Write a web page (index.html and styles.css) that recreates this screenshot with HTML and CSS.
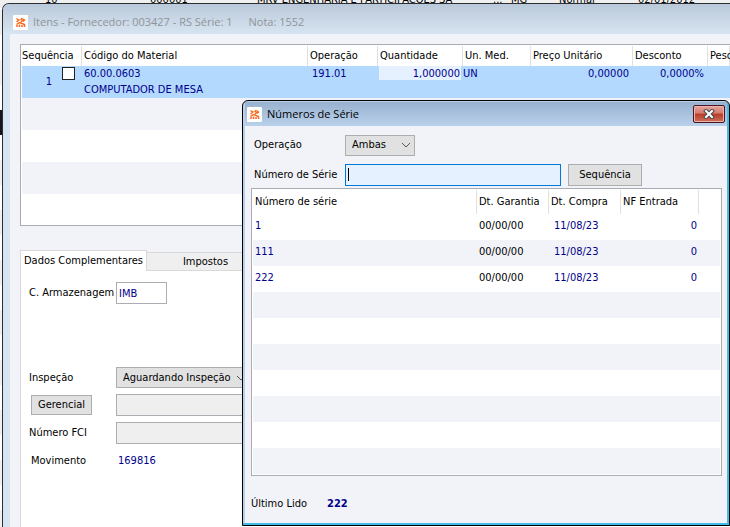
FILE: index.html
```html
<!DOCTYPE html>
<html lang="pt-BR">
<head>
    <meta charset="UTF-8">
    <meta name="viewport" content="width=device-width, initial-scale=1.0">
    <title>Números de Série</title>
    <link rel="stylesheet" href="styles.css">
</head>
<body>

    <!-- Lista de notas, atrás das janelas -->
    <div class="lista-fundo">
        <span>10</span><span>000001</span><span>MRV ENGENHARIA E PARTICIPACOES SA</span><span>...</span><span>MG</span><span>Normal</span><span>02/01/2012</span>
        <div class="linha-atual"></div>
    </div>

    <!-- Janela de itens -->
    <div class="janela itens">
        <div class="titulo">
            <svg class="logo" viewBox="0 0 15 15"><rect width="15" height="15" rx="1" fill="#fff"/><g stroke="#f7691e" stroke-width="1.500" fill="none"><path d="M3.500 3.500l2 1.500M3.500 7l3-2.500M7.500 5l2-2M8 7l3-3M10 6.500l2-2M3.500 9.500l3-2 5 2M4 12V10M6.500 12V9.500M9 12V10M11.500 12V9"/></g></svg>
            <span>Itens - Fornecedor: 003427 - RS Série: 1</span>
            <span class="nota">Nota: 1552</span>
        </div>
        <div class="corpo">
            <div class="grade grade-itens">
                <table>
                    <colgroup>
                        <col class="c-seq"><col class="c-cod"><col class="c-op"><col class="c-qtd"><col class="c-un"><col class="c-preco"><col class="c-desc"><col>
                    </colgroup>
                    <thead>
                        <tr><th>Sequência</th><th>Código do Material</th><th>Operação</th><th>Quantidade</th><th>Un. Med.</th><th>Preço Unitário</th><th>Desconto</th><th>Peso</th></tr>
                    </thead>
                    <tbody>
                        <tr class="selecionada">
                            <td><div class="seq"><span>1</span><input type="checkbox" aria-label="Selecionar item 1"></div></td>
                            <td>60.00.0603<br>COMPUTADOR DE MESA</td>
                            <td class="op">191.01</td>
                            <td class="num"><div class="foco">1,000000</div></td>
                            <td class="un">UN</td>
                            <td class="num">0,00000</td>
                            <td class="num">0,0000%</td>
                            <td></td>
                        </tr>
                        <tr><td colspan="8"></td></tr>
                        <tr><td colspan="8"></td></tr>
                        <tr><td colspan="8"></td></tr>
                        <tr><td colspan="8"></td></tr>
                    </tbody>
                </table>
            </div>

            <div class="abas" role="tablist">
                <button class="aba ativa" role="tab" aria-selected="true">Dados Complementares</button>
                <button class="aba" role="tab" aria-selected="false">Impostos</button>
            </div>
            <div class="painel">
                <label for="armazenagem">C. Armazenagem</label>
                <input class="campo curto" type="text" id="armazenagem" value="IMB">
                <label class="inspecao" for="inspecao">Inspeção</label>
                <div class="combo inspecao">
                    <select id="inspecao"><option>Aguardando Inspeção</option></select>
                    <svg viewBox="0 0 10 6"><path d="M1 1l4 4 4-4" fill="none" stroke="#555"/></svg>
                </div>
                <button class="botao gerencial" id="gerencial">Gerencial</button>
                <input class="campo" type="text" aria-labelledby="gerencial" disabled>
                <label for="fci">Número FCI</label>
                <input class="campo" type="text" id="fci" disabled>
                <span class="rotulo">Movimento</span>
                <span class="valor">169816</span>
            </div>
        </div>
    </div>

    <!-- Janela de números de série -->
    <div class="janela series" role="dialog" aria-label="Números de Série">
        <div class="titulo">
            <svg class="logo" viewBox="0 0 15 15"><rect width="15" height="15" rx="1" fill="#fff"/><g stroke="#f7691e" stroke-width="1.500" fill="none"><path d="M3.500 3.500l2 1.500M3.500 7l3-2.500M7.500 5l2-2M8 7l3-3M10 6.500l2-2M3.500 9.500l3-2 5 2M4 12V10M6.500 12V9.500M9 12V10M11.500 12V9"/></g></svg>
            <span>Números de Série</span>
            <button class="fechar" aria-label="Fechar"><svg viewBox="0 0 12 10"><path d="M3 2l6 6M9 2L3 8" stroke="#47474f" stroke-width="4" stroke-linecap="square"/><path d="M3 2l6 6M9 2L3 8" stroke="#fff" stroke-width="2" stroke-linecap="square"/></svg></button>
        </div>
        <div class="corpo">
            <div class="filtro">
                <label for="operacao">Operação</label>
                <div class="combo">
                    <select id="operacao"><option>Ambas</option></select>
                    <svg viewBox="0 0 10 6"><path d="M1 1l4 4 4-4" fill="none" stroke="#555"/></svg>
                </div>
            </div>
            <div class="filtro">
                <label for="serie">Número de Série</label>
                <input class="campo ativo" type="text" id="serie">
                <button class="botao sequencia">Sequência</button>
            </div>
            <div class="grade grade-series">
                <table>
                    <colgroup>
                        <col class="s-num"><col class="s-data"><col class="s-data"><col class="s-nf"><col>
                    </colgroup>
                    <thead>
                        <tr><th>Número de série</th><th>Dt. Garantia</th><th>Dt. Compra</th><th>NF Entrada</th><td></td></tr>
                    </thead>
                    <tbody>
                        <tr><td>1</td><td class="preto">00/00/00</td><td class="compra">11/08/23</td><td class="num">0</td><td></td></tr>
                        <tr><td>111</td><td class="preto">00/00/00</td><td class="compra">11/08/23</td><td class="num">0</td><td></td></tr>
                        <tr><td>222</td><td class="preto">00/00/00</td><td class="compra">11/08/23</td><td class="num">0</td><td></td></tr>
                        <tr><td colspan="5"></td></tr>
                        <tr><td colspan="5"></td></tr>
                        <tr><td colspan="5"></td></tr>
                        <tr><td colspan="5"></td></tr>
                        <tr><td colspan="5"></td></tr>
                        <tr><td colspan="5"></td></tr>
                        <tr><td colspan="5"></td></tr>
                    </tbody>
                </table>
            </div>
            <div class="rodape">
                <span>Último Lido</span>
                <b>222</b>
            </div>
        </div>
    </div>

</body>
</html>
```

FILE: styles.css
```css
* {
    box-sizing: border-box;
}
body {
    margin: 0;
    height: 100vh;
    position: relative;
    overflow: hidden;
    font-family: Tahoma, "DejaVu Sans Condensed", "DejaVu Sans", sans-serif;
    font-size: 11px;
    line-height: 16px;
    color: #000;
}
button, input, select {
    font: inherit;
    color: inherit;
    margin: 0;
    border-radius: 0;
}

/* Lista de notas no fundo */
.lista-fundo {
    height: 100%;
    background: repeating-linear-gradient(#f0f0f0 0 25px, #fff 25px 50px);
    background-position: 0 10px;
    display: grid;
    grid-template-columns: 105px 107px 236px 18px 48px 79px 1fr;
    grid-template-rows: 5px 105px 25px;
    padding-left: 45px;
}
.lista-fundo span {
    line-height: 16px;
    margin-top: -8px;
    white-space: nowrap;
}
.linha-atual {
    grid-row: 3;
    width: 4px;
    margin-left: -45px;
    background: #16161a;
}

/* Janelas */
.janela {
    position: absolute;
    right: 0;
    display: flex;
    flex-direction: column;
    border: 1px solid #2a2e33;
    border-radius: 7px 7px 0 0;
    overflow: hidden;
}
.titulo {
    display: flex;
    align-items: center;
    font-family: "Segoe UI", "Open Sans", sans-serif;
    white-space: nowrap;
}
.logo {
    width: 15px;
    height: 15px;
    flex: none;
}
.corpo {
    flex: 1;
    background: #f2f3f8;
}
.itens {
    left: 2px;
    top: 3px;
    bottom: 0;
    border-right: 0;
    border-bottom: 0;
    border-top-right-radius: 0;
    background: #d7e4f1;
    padding-left: 7px;
}
.itens .titulo {
    height: 30px;
    padding-top: 6px;
    padding-left: 10px;
    gap: 5px;
    margin-left: -7px;
    color: #8f9499;
    background: linear-gradient(#bac9da, #d7e4f1);
}
.nota {
    margin-left: 11px;
}
.itens .corpo {
    display: flex;
    flex-direction: column;
    padding: 10px 0 0 10px;
}

/* Grades */
.grade {
    background: #fff;
    border: 1px solid #a9acb3;
    overflow: hidden;
}
table {
    width: 100%;
    table-layout: fixed;
    border-collapse: collapse;
}
th, td {
    padding: 0 2px;
    text-align: left;
    font-weight: normal;
    white-space: nowrap;
}
th {
    background-image: linear-gradient(#e0e0e0, #e0e0e0);
    background-size: 1px 20px;
    background-position: right 1px;
    background-repeat: no-repeat;
}
td {
    color: #00008b;
}
.num {
    text-align: right;
}
.grade-itens {
    height: 182px;
    border-right: 0;
    padding-left: 1px;
    flex: none;
}
.grade-itens th {
    height: 21px;
    overflow: hidden;
}
.grade-itens td {
    height: 32px;
    vertical-align: top;
}
.grade-itens tr:nth-child(even) td {
    background: #f2f3f8;
}
.grade-itens .selecionada td {
    background: #b3d9ff;
}
.c-seq { width: 60px; }
.c-cod { width: 226px; }
.c-op { width: 70px; }
.c-qtd { width: 85px; }
.c-un { width: 68px; }
.c-preco { width: 102px; }
.c-desc { width: 75px; }
.grade-itens th:first-child {
    padding-left: 0;
}
.grade-itens .op {
    padding-left: 4px;
}
.grade-itens .un {
    padding-left: 0;
}
.grade-itens .num {
    padding-right: 4px;
}
.foco {
    background: #e5f1ff;
    margin: 0 -2px 0 -1px;
    padding-right: 1px;
    height: 14px;
}
.seq {
    display: flex;
    justify-content: flex-end;
    gap: 10px;
}
.seq span {
    padding-top: 8px;
}
.seq input {
    appearance: none;
    width: 13px;
    height: 13px;
    margin-top: 1px;
    margin-right: 5px;
    border: 1px solid #222;
    background: #fff;
}

/* Abas */
.abas {
    display: flex;
    align-items: flex-end;
    margin-top: 24px;
}
.aba {
    width: 118px;
    height: 19px;
    padding: 0;
    background: #efefef;
    border: 1px solid #d9d9d9;
    border-left: 0;
}
.ativa {
    width: 127px;
    height: 21px;
    background: #fff;
    border-left: 1px solid #d9d9d9;
    border-bottom: 0;
}
.painel {
    flex: 1;
    display: grid;
    grid-template-columns: 87px 1fr;
    grid-template-rows: 22px 78px 22px 22px 22px;
    align-items: center;
    align-content: start;
    row-gap: 6px;
    padding: 11px 0 0 8px;
    background: #fff;
    border-left: 1px solid #d9d9d9;
}
.painel .inspecao {
    align-self: end;
}
.painel label.inspecao {
    padding-bottom: 2px;
}
.rotulo {
    padding-left: 2px;
}
.campo {
    height: 22px;
    padding: 0 2px;
    border: 1px solid #abadb3;
    background: #fff;
    color: #00008b;
    outline: 0;
}
.campo:disabled {
    background: #efefef;
}
.curto {
    width: 51px;
}
.valor {
    padding-left: 2px;
    color: #00008b;
}
.botao {
    height: 20px;
    padding: 0;
    border: 1px solid #adadad;
    background: #e1e1e1;
}
.gerencial {
    width: 61px;
    margin-left: 2px;
}
.combo {
    display: grid;
    align-items: center;
    width: 70px;
    height: 21px;
}
.combo select, .combo svg {
    grid-area: 1 / 1;
}
.combo select {
    appearance: none;
    height: 21px;
    width: 100%;
    padding: 0 6px;
    border: 1px solid #adadad;
    background: #e1e1e1;
}
.combo svg {
    justify-self: end;
    width: 10px;
    height: 6px;
    margin-right: 4px;
    pointer-events: none;
}
.combo.inspecao {
    width: 134px;
}

/* Números de série */
.series {
    left: 242px;
    top: 100px;
    bottom: 1px;
    border-color: #000;
    border-radius: 6px 6px 0 0;
    background: #b9d1ea;
    box-shadow: inset -2px -2px #42bce6;
    padding: 1px 2px 2px;
}
.series .titulo {
    height: 24px;
    padding-left: 2px;
    gap: 5px;
    background: linear-gradient(#98b1cf, #b9d1ea);
}
.fechar {
    display: flex;
    align-items: center;
    justify-content: center;
    width: 32px;
    height: 18px;
    margin-left: auto;
    margin-right: 2px;
    padding: 0;
    border: 1px solid #4c1420;
    border-radius: 2px;
    background: linear-gradient(#e5a59d, #d4796c 45%, #b83b26 50%, #d0705c);
    box-shadow: inset 0 0 0 1px #e9b5ac;
}
.fechar svg {
    width: 12px;
    height: 10px;
}
.series .corpo {
    padding: 8px 5px 0 6px;
}
.filtro {
    display: flex;
    align-items: center;
    height: 22px;
    margin: 0 0 8px 3px;
}
.filtro label {
    width: 91px;
}
.filtro .ativo {
    width: 216px;
    border-color: #0078d7;
    background: linear-gradient(#000, #000) 2px 3px / 1px 13px no-repeat #e5f1ff;
    color: #000;
}
.sequencia {
    width: 74px;
    height: 22px;
    margin-left: 7px;
}
.grade-series {
    margin-top: -6px;
    padding: 0 1px 1px;
}
.grade-series th {
    height: 25px;
    background-size: 1px 24px;
}
.grade-series td {
    height: 26px;
    padding-bottom: 3px;
}
.grade-series thead td {
    height: 25px;
}
.grade-series tbody tr:nth-child(even) td {
    background: #f2f3f8;
}
.s-num { width: 224px; }
.s-data { width: 72px; }
.s-nf { width: 78px; }
.grade-series .preto {
    color: #000;
}
.grade-series .compra {
    padding-left: 5px;
}
.rodape {
    display: flex;
    gap: 20px;
    padding-top: 20px;
}
.rodape b {
    color: #00008b;
}
```
